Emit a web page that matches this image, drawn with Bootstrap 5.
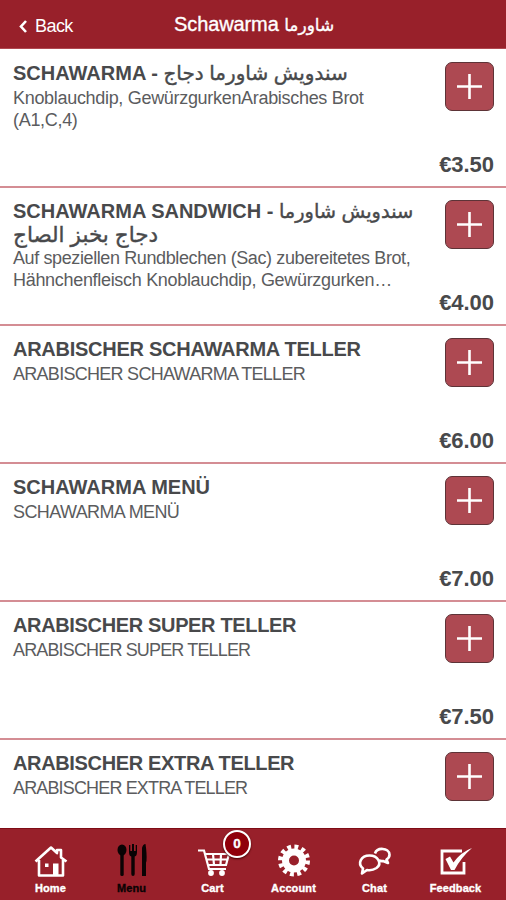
<!DOCTYPE html>
<html lang="de">
<head>
<meta charset="utf-8">
<meta name="viewport" content="width=device-width, initial-scale=1">
<title>Schawarma</title>
<link href="https://cdn.jsdelivr.net/npm/bootstrap@5.3.0/dist/css/bootstrap.min.css" rel="stylesheet">
<style>
body{font-family:"Liberation Sans","DejaVu Sans",sans-serif;color:#48494b;background:#fff}
.screen{height:900px}
.topbar{height:49px;background:#98202a;border-bottom:1px solid #b04850}
.topbar .back{width:150px;padding:4px 0 0 19px;font-size:18px;letter-spacing:-.55px;gap:8px}
.topbar h1{font-size:20px;letter-spacing:-.1px;-webkit-text-stroke:.35px #fff}
.topbar h1 span{font-size:17px}
main{padding-top:1px}
.dish{height:138px;border-bottom:2px solid #d48d94;padding:12px 12px 0 13px}
.dish h2{font-size:20px;line-height:22px;letter-spacing:0;margin:0 0 2px}
.dish h2.tight{letter-spacing:-.26px}
.dish h2.tighter{letter-spacing:-.35px}
.dish h2 span{font-size:20px;line-height:20px;font-weight:400;letter-spacing:0;-webkit-text-stroke:.4px #48494b}
.dish h2 .medium{font-size:19.4px}
.dish h2 .wide{display:inline-block;font-size:21.5px;line-height:22px;padding-top:2px}
.dish h2.double{height:44px;margin-bottom:2px}
.dish p{font-size:18px;line-height:22px;letter-spacing:-.31px;color:#5b5c5e;padding-top:1px}
.dish p .snug{letter-spacing:-.39px}
.dish p.caps{letter-spacing:-.72px}
.dish p.caps.narrow{letter-spacing:-.85px}
.dish p.caps.short{letter-spacing:-.6px}
.dish .side{width:60px}
.add{width:49px;height:49px;background:#ad4952;border:1px solid #5d3337;border-radius:7px}
.price{font-size:22px;line-height:24px;letter-spacing:-.05px;margin-bottom:9px}
.tabs{height:72px;background:#98202a;border-top:1px solid #7e0c16;padding:0 10px}
.tab{flex:1 1 0;padding-top:12px;font-size:11px;line-height:14px;letter-spacing:.12px;-webkit-text-stroke:.35px currentColor}
.tab svg{width:40px;height:40px}
.tab.current{color:#0a0304}
.count{width:28px;height:28px;left:51px;top:1px;background:#90000a;border:2px solid #fff;font-size:13.5px;box-shadow:0 1px 2px #400}
</style>
<script src="https://cdn.jsdelivr.net/npm/bootstrap@5.3.0/dist/js/bootstrap.bundle.min.js"></script>
</head>
<body>
<div class="screen d-flex flex-column overflow-hidden">
<header class="topbar d-flex flex-shrink-0 align-items-center text-white">
  <a class="back d-flex align-items-center text-white text-decoration-none" href="#"><svg width="8" height="13" viewBox="0 0 8 13" fill="none" stroke="#fff" stroke-width="2.6"><path d="M7 1 2 6.5 7 12"/></svg>Back</a>
  <h1 class="m-0 flex-fill fw-normal text-nowrap ps-4">Schawarma <span lang="ar">شاورما</span></h1>
</header>
<main class="flex-fill overflow-hidden">
  <article class="dish d-flex">
    <div class="flex-fill text-nowrap"><h2 class="fw-bold">SCHAWARMA - <span lang="ar">سندويش شاورما دجاج</span></h2><p class="m-0">Knoblauchdip, GewürzgurkenArabisches Brot<br>(A1,C,4)</p></div>
    <div class="side d-flex flex-column align-items-end justify-content-between"><button class="add btn p-0 d-flex align-items-center justify-content-center" aria-label="Add"><svg width="25" height="25" viewBox="0 0 25 25" stroke="#fff" stroke-width="2.6"><path d="M0 12.5h25M12.5 0v25"/></svg></button><div class="price fw-bold">€3.50</div></div>
  </article>
  <article class="dish d-flex">
    <div class="flex-fill text-nowrap"><h2 class="double fw-bold">SCHAWARMA SANDWICH - <span class="medium" lang="ar">سندويش شاورما</span><br><span class="wide" lang="ar">دجاج بخبز الصاج</span></h2><p class="m-0"><span class="snug">Auf speziellen Rundblechen (Sac) zubereitetes Brot,</span><br>Hähnchenfleisch Knoblauchdip, Gewürzgurken…</p></div>
    <div class="side d-flex flex-column align-items-end justify-content-between"><button class="add btn p-0 d-flex align-items-center justify-content-center" aria-label="Add"><svg width="25" height="25" viewBox="0 0 25 25" stroke="#fff" stroke-width="2.6"><path d="M0 12.5h25M12.5 0v25"/></svg></button><div class="price fw-bold">€4.00</div></div>
  </article>
  <article class="dish d-flex">
    <div class="flex-fill text-nowrap"><h2 class="tight fw-bold">ARABISCHER SCHAWARMA TELLER</h2><p class="caps m-0">ARABISCHER SCHAWARMA TELLER</p></div>
    <div class="side d-flex flex-column align-items-end justify-content-between"><button class="add btn p-0 d-flex align-items-center justify-content-center" aria-label="Add"><svg width="25" height="25" viewBox="0 0 25 25" stroke="#fff" stroke-width="2.6"><path d="M0 12.5h25M12.5 0v25"/></svg></button><div class="price fw-bold">€6.00</div></div>
  </article>
  <article class="dish d-flex">
    <div class="flex-fill text-nowrap"><h2 class="fw-bold">SCHAWARMA MENÜ</h2><p class="caps short m-0">SCHAWARMA MENÜ</p></div>
    <div class="side d-flex flex-column align-items-end justify-content-between"><button class="add btn p-0 d-flex align-items-center justify-content-center" aria-label="Add"><svg width="25" height="25" viewBox="0 0 25 25" stroke="#fff" stroke-width="2.6"><path d="M0 12.5h25M12.5 0v25"/></svg></button><div class="price fw-bold">€7.00</div></div>
  </article>
  <article class="dish d-flex">
    <div class="flex-fill text-nowrap"><h2 class="tighter fw-bold">ARABISCHER SUPER TELLER</h2><p class="caps narrow m-0">ARABISCHER SUPER TELLER</p></div>
    <div class="side d-flex flex-column align-items-end justify-content-between"><button class="add btn p-0 d-flex align-items-center justify-content-center" aria-label="Add"><svg width="25" height="25" viewBox="0 0 25 25" stroke="#fff" stroke-width="2.6"><path d="M0 12.5h25M12.5 0v25"/></svg></button><div class="price fw-bold">€7.50</div></div>
  </article>
  <article class="dish d-flex border-0">
    <div class="flex-fill text-nowrap"><h2 class="tighter fw-bold">ARABISCHER EXTRA TELLER</h2><p class="caps narrow m-0">ARABISCHER EXTRA TELLER</p></div>
    <div class="side d-flex flex-column align-items-end"><button class="add btn p-0 d-flex align-items-center justify-content-center" aria-label="Add"><svg width="25" height="25" viewBox="0 0 25 25" stroke="#fff" stroke-width="2.6"><path d="M0 12.5h25M12.5 0v25"/></svg></button></div>
  </article>
</main>
<nav class="tabs d-flex flex-shrink-0 text-white fw-bold">
  <div class="tab d-flex flex-column align-items-center">
    <svg viewBox="0 0 40 40" fill="none" stroke="#fff" stroke-width="2.600" stroke-linejoin="round"><path d="m4.500 20.500 15.500-14 6 5.500V9h4v7.500l5.500 4M8 19v15.500h24V19"/><path d="M22 22.500h5.500V34H22zM14 22.500h3.500V26H14z" fill="#fff" stroke="none"/></svg>Home</div>
  <div class="tab current d-flex flex-column align-items-center">
    <svg viewBox="0 0 40 40" fill="currentColor"><ellipse cx="10" cy="9" rx="4.500" ry="5.500"/><rect x="8.300" y="12" width="3.400" height="23" rx="1.500"/><path d="M17 4h1.300v6H20V3h2v7h1.700V4H25v7q0 4-2.300 4.600V33q0 2-1.700 2t-1.700-2V15.600Q17 15 17 11zM30 35V7q1-4 3.500-4 1.500 10 1 17l-.5 1.500V35z"/></svg>Menu</div>
  <div class="tab position-relative d-flex flex-column align-items-center">
    <svg viewBox="0 0 40 40" fill="none" stroke="#fff" stroke-width="2.200"><path d="M5 9.500h6L16 28h17M12 13h24l-3 11H15M13 18.500h21M20 13l1 11M28 13l-.5 11" /><circle cx="18" cy="32" r="2.900" fill="#fff" stroke="none"/><circle cx="29" cy="32" r="2.900" fill="#fff" stroke="none"/></svg>Cart
    <span class="count position-absolute rounded-circle d-flex align-items-center justify-content-center">0</span></div>
  <div class="tab d-flex flex-column align-items-center">
    <svg viewBox="0 0 40 40"><circle cx="20" cy="19.500" r="8.500" fill="none" stroke="#fff" stroke-width="7"/><circle cx="20" cy="19.500" r="13.500" fill="none" stroke="#fff" stroke-width="5" stroke-dasharray="3.800 3.269"/></svg>Account</div>
  <div class="tab d-flex flex-column align-items-center">
    <svg viewBox="0 0 40 40" fill="none" stroke="#fff" stroke-width="2.600" stroke-linejoin="round"><path d="M8 27.500c-6-5-2-13 6.500-13s13 8 7 12.500q-4.500 3-9.500 2l-5 3.500z"/><path d="M20 12.500c2-6.500 14-6 14.500 1 .200 2.500-1.500 4-3 5l1.500 3.500-5-2q-2 .3-4-.5"/></svg>Chat</div>
  <div class="tab d-flex flex-column align-items-center">
    <svg viewBox="0 0 40 40" fill="none" stroke="#fff" stroke-width="2.800"><path d="M26 10H6v22h22V21"/><path d="m9.500 18 4.500-2.500 3.500 6Q25 11 36 7 25 16.500 18.500 29H15z" fill="#fff" stroke="none"/></svg>Feedback</div>
</nav>
</div>
</body>
</html>
